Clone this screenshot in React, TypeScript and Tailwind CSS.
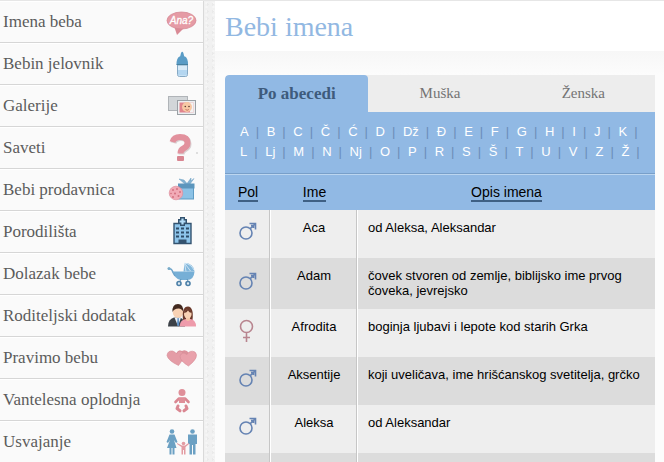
import React, { useState } from 'react';

type Gender = 'm' | 'f';

interface BabyName {
  name: string;
  gender: Gender;
  description: string;
}

const BubbleIcon = () => (
  <>
    <path d="M8 20L11 29L19 21Z" fill="#d98a95" />
    <ellipse cx="15.5" cy="14.5" rx="14.5" ry="8.5" fill="#e59ba5" stroke="#d58a95" strokeWidth="0.8" />
    <text x="15.5" y="18" textAnchor="middle" fontSize="10" fontStyle="italic" fill="#fff" stroke="#fff" strokeWidth="0.3" fontFamily="Liberation Sans, sans-serif">Ana?</text>
  </>
);

const BottleIcon = () => (
  <>
    <path d="M14 9L15 5Q16.2 2.500 17.4 5L18.400 9Z" fill="#5a9cc6" />
    <path d="M10.5 16.500Q10.5 10 13.500 8.5H19Q22 10 22 16.500Z" fill="#5a9cc6" />
    <path d="M11.500 17H21.500V26.500Q21.5 28.5 19.5 28.5H13.500Q11.500 28.500 11.500 26.500Z" fill="#d9ebf8" stroke="#86a9c4" />
    <path d="M12 22H21V27.500H12Z" fill="#b4d6f0" />
    <path d="M10.500 16.500H22" stroke="#46809f" />
  </>
);

const GalleryIcon = () => (
  <>
    <rect x="2.5" y="6.5" width="19" height="14" fill="#d2d6d9" stroke="#b0b4b8" />
    <rect x="11.5" y="10.5" width="18" height="14" fill="#eceff1" stroke="#9aa0a5" />
    <rect x="13.5" y="12.5" width="14" height="10" fill="#e1848d" />
    <path d="M23 12.5H27.5V22.5H24Z" fill="#f3f3f3" />
    <circle cx="21" cy="17" r="5" fill="#f7c8a4" />
    <circle cx="19.3" cy="16.5" r="0.8" fill="#5a3a30" />
    <circle cx="23" cy="16.5" r="0.8" fill="#5a3a30" />
    <path d="M19.5 19.5Q21.2 21 22.8 19.5" fill="none" stroke="#b85a50" strokeWidth="0.8" />
  </>
);

const QuestionIcon = () => (
  <>
    <path d="M6.5 10Q8 5 14 5Q21.5 5 21.5 11Q21.5 14.5 17.5 16.5Q14.5 18 14.5 21.5" fill="none" stroke="#d9d0d2" strokeWidth="6" transform="translate(1 1)" />
    <path d="M6.5 10Q8 5 14 5Q21.5 5 21.5 11Q21.5 14.5 17.5 16.5Q14.5 18 14.5 21.5" fill="none" stroke="#e2919d" strokeWidth="6" />
    <rect x="11" y="24" width="7" height="5" rx="1" fill="#d98591" />
    <circle cx="31" cy="21" r="1" fill="#d5d5d5" />
  </>
);

const GiftIcon = () => (
  <>
    <path d="M19 10L13 5L18 6L21 9.500L25 4V7L28 4.500L24 10Z" fill="#84b3d2" stroke="#6a9fc2" strokeWidth="0.5" />
    <rect x="13" y="13" width="14.5" height="12" fill="#8cc2e6" stroke="#5f9cc4" />
    <rect x="12" y="9.5" width="16.5" height="5" fill="#5c96bd" />
    <circle cx="10" cy="19" r="6.8" fill="#f1aab6" stroke="#dd8f9e" strokeWidth="0.7" />
    <g fill="#d2707f">
      <circle cx="7" cy="16" r="1" />
      <circle cx="11" cy="15" r="1" />
      <circle cx="14" cy="18" r="1" />
      <circle cx="9" cy="19.5" r="1" />
      <circle cx="12.5" cy="22" r="1" />
      <circle cx="7" cy="23" r="1" />
      <circle cx="5" cy="19.5" r="0.8" />
    </g>
  </>
);

const HospitalIcon = () => (
  <>
    <path d="M8 27.5V7.5H25V27.5Z" fill="#8dc4ea" stroke="#34536f" strokeWidth="1.4" />
    <path d="M14 1H19V3H21V8H19V10H14V8H12V3H14Z" fill="#34536f" />
    <path d="M16.5 2.5V8.5M13.5 5.5H19.5" stroke="#b3dcf7" strokeWidth="2.2" />
    <g stroke="#2e4c68" strokeWidth="2">
      <path d="M10 12.5H13M15 12.5H18M20 12.5H23" />
      <path d="M10 16.5H13M15 16.5H18M20 16.5H23" />
      <path d="M10 20.5H13M15 20.5H18M20 20.5H23" />
    </g>
    <path d="M12.5 23.5H20.5V28H12.5Z" fill="#34536f" />
  </>
);

const StrollerIcon = () => (
  <>
    <path d="M7 13.500H28.5Q28 22 21 22H14.5Q8.5 21 7 13.500Z" fill="#76afd6" />
    <path d="M17.5 13.5L18.5 5Q27.5 5 28.5 13.5Z" fill="#82b7db" />
    <path d="M18.5 5L20 13.5M18.5 5L24.5 13M18.5 5Q25 6 28 12" fill="none" stroke="#dceefa" strokeWidth="0.8" />
    <path d="M2 11Q5.5 9.5 7 14.5L9 18" fill="none" stroke="#6ca3ca" strokeWidth="1.5" />
    <circle cx="3" cy="10.5" r="1.5" fill="#79abc9" />
    <path d="M15 21L13 25M21 21L23 25" stroke="#5d93b9" />
    <g fill="#dfeaf2" stroke="#4d80a8" strokeWidth="1.6">
      <circle cx="13" cy="25.5" r="2" />
      <circle cx="22" cy="25.5" r="2" />
    </g>
  </>
);

const CoupleIcon = () => (
  <>
    <path d="M2 26.5Q2 19 8 17.5H14Q19 19 19 26.5Z" fill="#3c4147" />
    <path d="M8.5 17.5L12 26L15 17.5Z" fill="#e9f1f8" />
    <path d="M11.5 18L11 25L12.5 26.5L13.3 25L12.7 18Z" fill="#5d8fc4" />
    <circle cx="12" cy="12.500" r="5.2" fill="#f8d2b4" />
    <path d="M6.5 12Q6 4 12 4Q17.5 4 17.3 12Q16 8.5 12.5 8.5Q8 8.5 6.5 12Z" fill="#42291f" />
    <path d="M17 20Q15.5 6.5 22 6.5Q28 7 26.5 20Z" fill="#6b3a2b" />
    <path d="M13.5 26.5Q14 19.5 20 19H24.5Q30 20 30 26.5Z" fill="#ee9bab" />
    <path d="M20 17H24V20Q22 22 20 20Z" fill="#f3c3a4" />
    <ellipse cx="21.8" cy="14" rx="3.8" ry="4.5" fill="#f8d2b4" />
    <path d="M18 13Q19 8.5 23 9Q25.5 10 25.7 13Q23 12.5 22 10.5Q21 12.5 18 13Z" fill="#6b3a2b" />
  </>
);

const HeartsIcon = () => (
  <>
    <path d="M10 12Q12 7 16 9Q20 7 23 11L17 20Z" fill="#dc929c" />
    <path d="M12.5 23.500Q2 18.500 1 13.500Q1.500 8.5 6.500 9Q9 9.500 10.500 12Q12 8 16 9.500Q20.500 14 12.5 23.500Z" fill="#e49ca6" stroke="#d58b96" strokeWidth="0.6" />
    <path d="M22.500 24Q14 19 14 14Q16 9 21 12.5Q24 7.500 29 10Q34 15 22.500 24Z" fill="#e9a1ab" stroke="#d58b96" strokeWidth="0.6" />
  </>
);

const BabyIcon = () => (
  <g fill="none" stroke="#da8792" strokeLinecap="round" strokeLinejoin="round">
    <circle cx="16" cy="8.5" r="3.5" fill="#df8f99" stroke="none" />
    <path d="M9.5 18L13 14.5H19L22.5 18" strokeWidth="2.6" />
    <path d="M13 14H19V19H13Z" fill="#df8f99" stroke="none" />
    <path d="M12 22L11 24.5L14 26.8M20 22L21 24.5L18 26.8" strokeWidth="3" />
  </g>
);

const FamilyIcon = () => (
  <>
    <g fill="#6ba0c3">
      <circle cx="6" cy="5.500" r="2.3" />
      <path d="M3.5 8.500H8.5L11.5 16L10 17L8 14L10.5 22H8.5V28.5H6.5V22H5.5V28.5H3.5V22H1L4 14L2 17L0.5 16Z" />
      <circle cx="26.5" cy="5.500" r="2.3" />
      <path d="M22 8.500H31V18H29.5V28.5H27V19H26V28.5H23.5V18H22Z" />
    </g>
    <g fill="#e39ba2">
      <circle cx="17.5" cy="17.5" r="1.8" />
      <path d="M11 17L16 19.5H19L22.5 17L23 18L19.5 21V28.5H18V24H17V28.5H15.5V21L11 18Z" />
    </g>
  </>
);

const menuItems = [
  { label: 'Imena beba', Icon: BubbleIcon },
  { label: 'Bebin jelovnik', Icon: BottleIcon },
  { label: 'Galerije', Icon: GalleryIcon },
  { label: 'Saveti', Icon: QuestionIcon },
  { label: 'Bebi prodavnica', Icon: GiftIcon },
  { label: 'Porodilišta', Icon: HospitalIcon },
  { label: 'Dolazak bebe', Icon: StrollerIcon },
  { label: 'Roditeljski dodatak', Icon: CoupleIcon },
  { label: 'Pravimo bebu', Icon: HeartsIcon },
  { label: 'Vantelesna oplodnja', Icon: BabyIcon },
  { label: 'Usvajanje', Icon: FamilyIcon },
];

const tabs = ['Po abecedi', 'Muška', 'Ženska'];

const alphabet = [
  ['A', 'B', 'C', 'Č', 'Ć', 'D', 'Dž', 'Đ', 'E', 'F', 'G', 'H', 'I', 'J', 'K'],
  ['L', 'Lj', 'M', 'N', 'Nj', 'O', 'P', 'R', 'S', 'Š', 'T', 'U', 'V', 'Z', 'Ž'],
];

const names: BabyName[] = [
  { name: 'Aca', gender: 'm', description: 'od Aleksa, Aleksandar' },
  { name: 'Adam', gender: 'm', description: 'čovek stvoren od zemlje, biblijsko ime prvog čoveka, jevrejsko' },
  { name: 'Afrodita', gender: 'f', description: 'boginja ljubavi i lepote kod starih Grka' },
  { name: 'Aksentije', gender: 'm', description: 'koji uveličava, ime hrišćanskog svetitelja, grčko' },
  { name: 'Aleksa', gender: 'm', description: 'od Aleksandar' },
];

const GenderIcon: React.FC<{ gender: Gender }> = ({ gender }) => (
  <svg viewBox="0 0 18 28" className="mx-auto block h-7 w-[18px]" fill="none" strokeWidth="1.6">
    {gender === 'm' ? (
      <path d="M13 13A6 6 0 1 1 1 13A6 6 0 1 1 13 13M11 8.8L16 4M10.5 3.500H16.5V9.5M12 5.500H14.500V8" stroke="#6583b3" />
    ) : (
      <path d="M13.5 7.5A6 6 0 1 1 1.5 7.5A6 6 0 1 1 13.5 7.5M7.5 13.5V23M4 18.5H11" stroke="#b8858f" />
    )}
  </svg>
);

const Sidebar = () => (
  <nav className="w-[204px] shrink-0 border-r border-[#d9d9d9] bg-[#fafafa]">
    <ul>
      {menuItems.map(({ label, Icon }) => (
        <li key={label} className="border-b border-[#d6d6d6]">
          <a href="#" className="flex h-[41px] items-center justify-between border-t border-white pr-[5px] pl-[3px] font-['Liberation_Serif',serif] text-[17px] text-[#5c5c5c]">
            {label}
            <svg viewBox="0 0 32 32" className="size-8 shrink-0" aria-hidden="true">
              <Icon />
            </svg>
          </a>
        </li>
      ))}
    </ul>
  </nav>
);

const App: React.FC = () => {
  const [activeTab, setActiveTab] = useState(tabs[0]);

  const columnLine = 'border-r border-white shadow-[inset_-1px_0_0_#c6c6c6]';

  return (
    <div className="flex h-screen overflow-hidden border-t border-[#e6e6e6] bg-[#f1f1f1] bg-[radial-gradient(#eaeaea_1px,transparent_1px),radial-gradient(#f6f6f6_1px,transparent_2px)] bg-[size:5px_7px,7px_4px] font-['Liberation_Sans',sans-serif]">
      <Sidebar />

      <main className="ml-[11px] min-w-0 flex-1 bg-[#fcfcfc]">
        <header className="bg-white px-2.5 pt-2.5 pb-2">
          <h1 className="font-['Liberation_Serif',serif] text-[28px] leading-8 text-[#92b8e2]">Bebi imena</h1>
        </header>
        <div className="h-6 bg-gradient-to-b from-[#f7f7f7] to-[#fcfcfc]"></div>

        <section className="mr-[9px] ml-2.5">
          <div role="tablist" className="grid grid-cols-3 overflow-hidden rounded-tl bg-[#ededed]">
            {tabs.map((tab) => (
              <button
                key={tab}
                role="tab"
                aria-selected={tab === activeTab}
                onClick={() => setActiveTab(tab)}
                className={
                  tab === activeTab
                    ? "h-[37px] rounded-t bg-[#91b9e4] font-['Liberation_Serif',serif] text-[17px] font-bold text-[#3e5b7c]"
                    : "h-[37px] font-['Liberation_Serif',serif] text-[15px] text-[#747474]"
                }
              >
                {tab}
              </button>
            ))}
          </div>

          <div className="border-b border-[#789fc9] bg-[#91b9e4] pt-2.5 pb-[11px] pl-[15px]">
            {alphabet.map((line) => (
              <ul key={line[0]} className="flex text-[13px] leading-5 text-white">
                {line.map((letter) => (
                  <li key={letter} className="flex">
                    <a href="#">{letter}</a>
                    <span className="mr-2 ml-[7px] w-[3px] text-[#6b8db8]">|</span>
                  </li>
                ))}
              </ul>
            ))}
          </div>

          <table className="w-full table-fixed border-separate border-spacing-0 text-black">
            <colgroup>
              <col className="w-[46px]" />
              <col className="w-[87px]" />
              <col />
            </colgroup>
            <thead className="bg-[#91b9e4] text-sm leading-4">
              <tr>
                {['Pol', 'Ime', 'Opis imena'].map((title) => (
                  <th key={title} className="h-9 border-t border-[#bcd6f0] p-0 font-normal">
                    <a href="#" className="inline-block border-b-2 border-[#3f6084]">{title}</a>
                  </th>
                ))}
              </tr>
            </thead>
            <tbody className="text-[13px] leading-[15px]">
              {names.map((item) => (
                <tr key={item.name} className="bg-[#eeeeee] even:bg-[#dcdcdc]">
                  <td className={`h-12 p-0 align-middle ${columnLine}`}>
                    <GenderIcon gender={item.gender} />
                  </td>
                  <td className={`px-1 pt-2.5 pb-[11px] text-center align-top ${columnLine}`}>{item.name}</td>
                  <td className="px-2.5 pt-2.5 pb-[11px] align-top">{item.description}</td>
                </tr>
              ))}
              <tr className="bg-[#dcdcdc]">
                <td className={`h-12 ${columnLine}`}></td>
                <td className={columnLine}></td>
                <td></td>
              </tr>
            </tbody>
          </table>
        </section>
      </main>
    </div>
  );
};

export default App;
